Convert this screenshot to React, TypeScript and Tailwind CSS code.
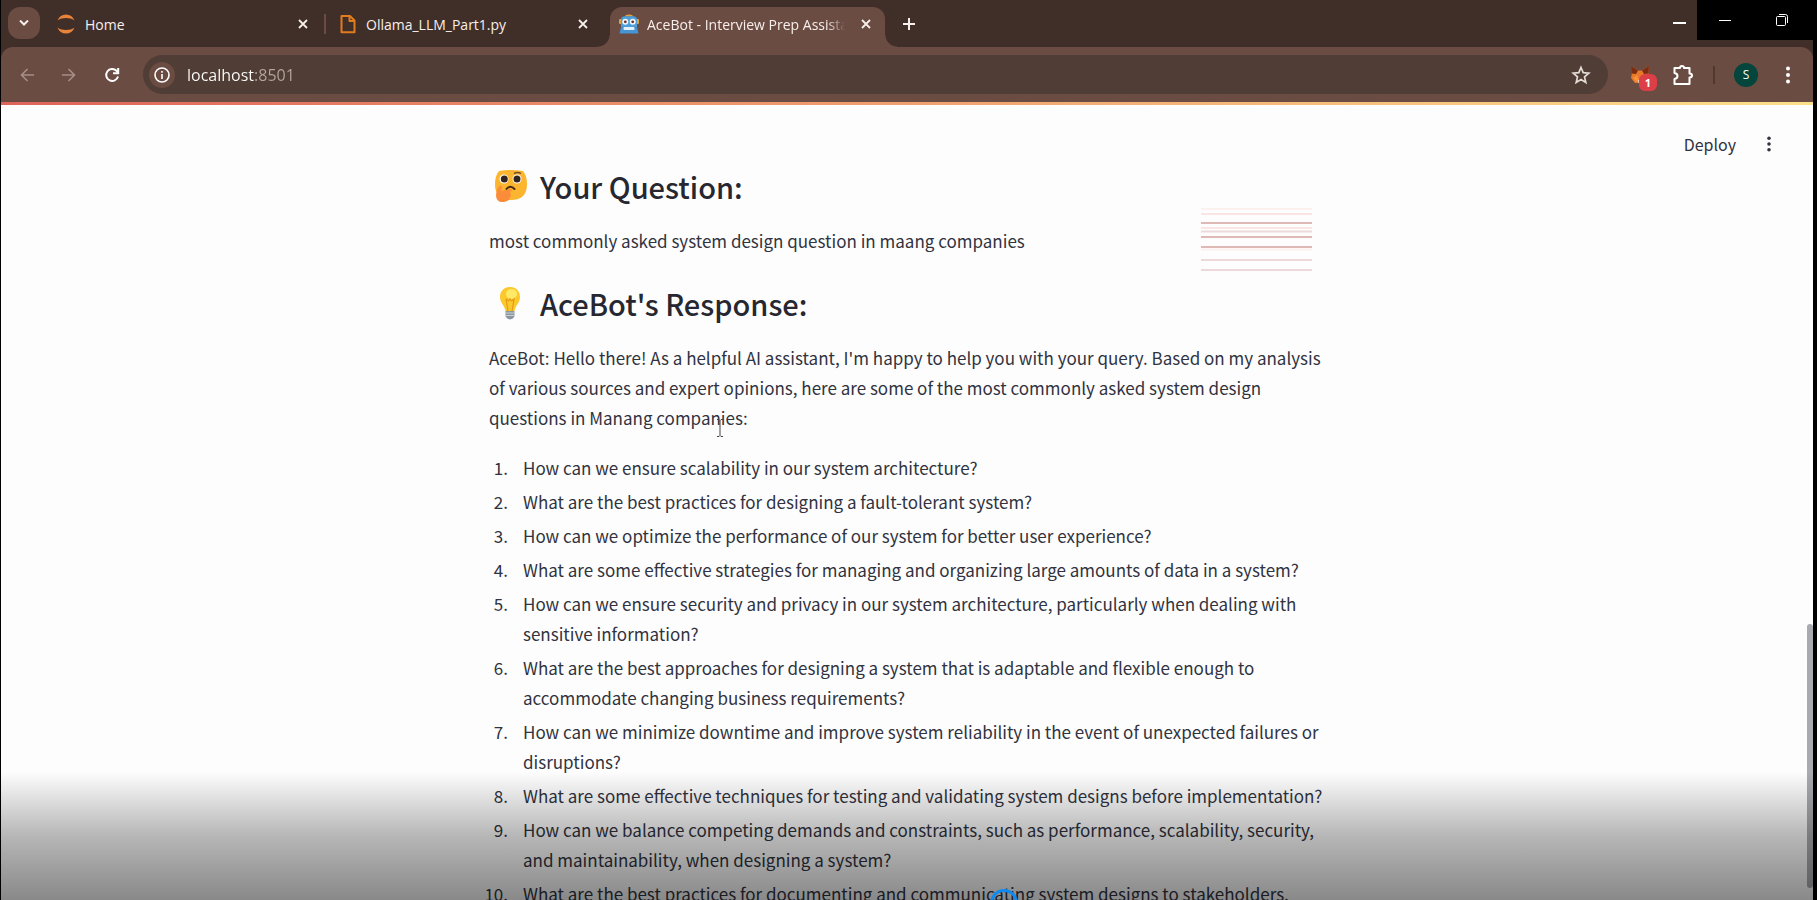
import { ReactNode } from 'react'

const questions = [
  'How can we ensure scalability in our system architecture?',
  'What are the best practices for designing a fault-tolerant system?',
  'How can we optimize the performance of our system for better user experience?',
  'What are some effective strategies for managing and organizing large amounts of data in a system?',
  'How can we ensure security and privacy in our system architecture, particularly when dealing with sensitive information?',
  'What are the best approaches for designing a system that is adaptable and flexible enough to accommodate changing business requirements?',
  'How can we minimize downtime and improve system reliability in the event of unexpected failures or disruptions?',
  'What are some effective techniques for testing and validating system designs before implementation?',
  'How can we balance competing demands and constraints, such as performance, scalability, security, and maintainability, when designing a system?',
  'What are the best practices for documenting and communicating system designs to stakeholders, including developers, users, and management?',
]

function CloseIcon() {
  return (
    <svg viewBox="0 0 10 10" className="size-[10px]" fill="none" stroke="currentColor" strokeWidth="1.8">
      <path d="M1 1l8 8M9 1l-8 8" />
    </svg>
  )
}

function JupyterIcon() {
  return (
    <svg viewBox="0 0 18 20" className="h-5 w-[18px] shrink-0" fill="#e8833a">
      <path d="M0.5 6.5C2 2.500 5 0.500 9 0.500s7 2 8.500 6C15 4.700 12 4 9 4s-6 .7-8.500 2.500z" />
      <path d="M0.500 13.500C2 17.500 5 19.500 9 19.500s7-2 8.500-6C15 15.300 12 16 9 16s-6-.7-8.500-2.500z" />
    </svg>
  )
}

function FileIcon() {
  return (
    <svg viewBox="0 0 16 20" className="h-5 w-4 shrink-0" fill="none" stroke="#e07d1d" strokeWidth="2" strokeLinejoin="round">
      <path d="M1.500 2h8.500l4.500 4.500V18.300h-13z" />
      <path d="M9.500 2v5h5" />
    </svg>
  )
}

function RobotIcon() {
  return (
    <svg viewBox="0 0 20 20" className="size-5 shrink-0">
      <path d="M6 2.500Q6 .5 10 .5t4 2z" fill="#e0a13c" />
      <rect x="0" y="5" width="3" height="5" rx="1" fill="#e0a13c" />
      <rect x="17" y="5" width="3" height="5" rx="1" fill="#e0a13c" />
      <path d="M2 6q0-3.700 4-3.700h8q4 0 4 3.700v7.500H2z" fill="#4d9fdb" />
      <path d="M.5 19.500l1.500-6h16l1.500 6z" fill="#4596d6" />
      <circle cx="6.300" cy="7.800" r="3" fill="#f4f7fa" />
      <circle cx="13.700" cy="7.800" r="3" fill="#f4f7fa" />
      <circle cx="6.300" cy="7.800" r="1.400" fill="#6b3030" />
      <circle cx="13.700" cy="7.800" r="1.400" fill="#6b3030" />
      <rect x="4.500" y="13" width="11" height="3" rx="1" fill="#e4f0f9" />
    </svg>
  )
}

function FoxIcon() {
  return (
    <svg viewBox="0 0 20 19" className="h-[19px] w-5">
      <path d="M1 1l7 4.500h4L19 1l-.5 8 .5 4-4 5H5l-4-5 .8-4z" fill="#e8782a" />
      <path d="M1 1l7 4.500-2 3.500-4.500-.5zM19 1l-7 4.500 2 3.500 4.500-.5z" fill="#7a2d12" />
      <path d="M3 13l4-3 2 5-3 2z" fill="#f99339" />
      <path d="M8 15h4l-.5 3h-3z" fill="#e8dcd4" />
    </svg>
  )
}

function ThinkingFace() {
  return (
    <svg viewBox="0 0 34 34" className="h-[34px] w-[34px] shrink-0">
      <path d="M5 2Q17 0 29 2q4 5 4 13 0 16-16 16T1 15Q1 7 5 2z" fill="#fcb52f" />
      <circle cx="10" cy="10" r="4.500" fill="#fff" />
      <circle cx="23" cy="10" r="4.500" fill="#fff" />
      <circle cx="10.300" cy="10" r="3.500" fill="#33231e" />
      <circle cx="23" cy="10" r="3.500" fill="#33231e" />
      <path d="M12.500 20q4-4.500 8 0" fill="none" stroke="#4b2c17" strokeWidth="2" strokeLinecap="round" />
      <path d="M20 4.500q4-2 7 0" fill="none" stroke="#7a4a1e" strokeWidth="1.400" />
      <path d="M2 26q0-5 3-9 2-1 3 1l-1 4 9-2q2 0 2 2l-3 1q2 0 1.500 2 1 2-.5 3 0 4-6 5Q2 34 2 26z" fill="#fb8c3a" />
    </svg>
  )
}

function BulbIcon() {
  return (
    <svg viewBox="0 0 34 34" className="h-[34px] w-[34px] shrink-0">
      <path d="M16 1C9.500 1 6 5.500 6 11c0 6 4.500 8 5.500 14h9C21.500 19 26 17 26 11 26 5.500 22.500 1 16 1z" fill="#fcc92c" />
      <ellipse cx="17.500" cy="8" rx="5.500" ry="5" fill="#fff176" opacity=".8" />
      <path d="M12 13l2.500 2 1.500-2 1.500 2 2.500-2-2 12M12 13l2 12" fill="none" stroke="#e69a16" strokeWidth="1.200" />
      <path d="M11.500 25h9v5q-1 3-4.500 3.500-3.500-.5-4.500-3.500z" fill="#8b979e" />
      <path d="M11.500 27h9M11.500 29.500h9" stroke="#c7d0d4" strokeWidth="1" />
    </svg>
  )
}

function Dots({ className }: { className: string }) {
  return (
    <svg viewBox="0 0 4 18" className={className} fill="currentColor">
      <circle cx="2" cy="2.500" r="2" />
      <circle cx="2" cy="9" r="2" />
      <circle cx="2" cy="15.500" r="2" />
    </svg>
  )
}

function Tab({ icon, title }: { icon: ReactNode; title: string }) {
  return (
    <div className="flex h-8 items-center gap-[10px] px-4">
      {icon}
      <span className="flex-1 whitespace-nowrap">{title}</span>
      <button aria-label={'Close ' + title}><CloseIcon /></button>
    </div>
  )
}

function TabStrip() {
  return (
    <div className="flex h-[47px] items-start bg-[#402e28] text-[14px] text-[#f7efeb]">
      <button aria-label="Search tabs" className="mt-[7px] ml-[7px] grid size-8 place-items-center rounded-xl bg-[#6b4c43]">
        <svg viewBox="0 0 10 6" className="h-[6px] w-[10px]" fill="none" stroke="currentColor" strokeWidth="2">
          <path d="M1 .5l4 4 4-4" />
        </svg>
      </button>
      <div className="mt-2 ml-px w-[283px]"><Tab icon={<JupyterIcon />} title="Home" /></div>
      <div className="mt-[14px] h-5 w-[2px] bg-[#6b4c43]" />
      <div className="mt-2 -ml-[2px] w-[280px]"><Tab icon={<FileIcon />} title="Ollama_LLM_Part1.py" /></div>
      <div className="relative mt-[7px] ml-[6px] flex h-10 w-[275px] items-center gap-2 rounded-t-xl bg-[#6b4c43] pr-[14px] pb-[6px] pl-[9px]">
        <span className="absolute bottom-0 -left-3 size-3 bg-[radial-gradient(circle_at_0_0,transparent_11px,#6b4c43_12px)]" />
        <span className="absolute -right-3 bottom-0 size-3 bg-[radial-gradient(circle_at_100%_0,transparent_11px,#6b4c43_12px)]" />
        <RobotIcon />
        <span className="w-[198px] overflow-hidden whitespace-nowrap [mask-image:linear-gradient(to_right,#000_180px,transparent)]">
          AceBot - Interview Prep Assistant
        </span>
        <button aria-label="Close AceBot" className="ml-auto"><CloseIcon /></button>
      </div>
      <button aria-label="New tab" className="mt-[17px] ml-[17px]">
        <svg viewBox="0 0 14 14" className="size-[14px]" fill="none" stroke="currentColor" strokeWidth="2">
          <path d="M7 1v12M1 7h12" />
        </svg>
      </button>
      <button aria-label="Minimize browser" className="mt-[22px] mr-[11px] ml-auto h-[2px] w-[13px] bg-white" />
      <div className="-mr-1 flex h-10 w-[120px] items-center justify-between bg-black pr-[29px] pl-[22px] text-white">
        <button aria-label="Minimize" className="h-px w-3 bg-white" />
        <button aria-label="Restore">
          <svg viewBox="0 0 12 12" className="size-3" fill="none" stroke="currentColor">
            <rect x=".5" y="2.500" width="9" height="9" rx="1" />
            <path d="M3 .5h6.500q2 0 2 2V9" />
          </svg>
        </button>
      </div>
    </div>
  )
}

function Toolbar() {
  return (
    <div className="bg-[#402e28]">
      <div className="flex h-[55px] items-center rounded-t-xl bg-[#6b4c43] pr-[23px] pl-[19px] text-white">
        <button aria-label="Back" className="text-[#a68e86]">
          <svg viewBox="0 0 14 14" className="size-[14px]" fill="none" stroke="currentColor" strokeWidth="1.600"><path d="M14 7H1.500M7.500 1L1.500 7l6 6" /></svg>
        </button>
        <button aria-label="Forward" className="ml-7 text-[#a68e86]">
          <svg viewBox="0 0 14 14" className="size-[14px]" fill="none" stroke="currentColor" strokeWidth="1.600"><path d="M0 7h12.500M6.500 1l6 6-6 6" /></svg>
        </button>
        <button aria-label="Reload" className="ml-7">
          <svg viewBox="0 0 16 16" className="size-4" fill="none" stroke="currentColor" strokeWidth="2">
            <path d="M14 9.500A6 6 0 1 1 12.500 3.800L14 5.500" />
            <path d="M14.200 1v5.200H9" />
          </svg>
        </button>
        <div className="ml-[23px] flex h-[39px] flex-1 items-center rounded-full bg-[#503d36] pr-[17px] pl-[6px]">
          <button aria-label="Site information" className="grid size-[26px] place-items-center rounded-full bg-[#6b4c43]">
            <svg viewBox="0 0 16 16" className="size-4" fill="none" stroke="currentColor" strokeWidth="1.600">
              <circle cx="8" cy="8" r="7" />
              <path d="M8 7v5M8 4v1.800" />
            </svg>
          </button>
          {/* the port is dimmer than the host name */}
          <input
            aria-label="Address"
            defaultValue="localhost:8501"
            className="ml-3 h-6 flex-1 bg-[linear-gradient(to_right,#fff_67px,#b5a59f_67px)] bg-clip-text text-[16px] leading-6 text-transparent outline-none"
          />
          <button aria-label="Bookmark">
            <svg viewBox="0 0 20 20" className="size-5" fill="none" stroke="#e4dad6" strokeWidth="1.700" strokeLinejoin="miter">
              <path d="M10 2.500l2.200 5.200 5.600.5-4.300 3.700 1.300 5.500L10 14.500l-4.800 2.900 1.300-5.500L2.200 8.200l5.600-.5z" />
            </svg>
          </button>
        </div>
        <button aria-label="Wallet, 1 notification" className="relative ml-[22px]">
          <FoxIcon />
          <span className="absolute top-[9px] left-[9px] grid h-[17px] w-[18px] place-items-center rounded-md bg-[#dc3f48] text-[11px] leading-none font-bold">1</span>
        </button>
        <button aria-label="Extensions" className="ml-[23px]">
          <svg viewBox="0 0 20 20" className="size-5" fill="none" stroke="currentColor" strokeWidth="2" strokeLinejoin="round">
            <path d="M1.500 3H7q0-2 2-2t2 2h5.500v5.500q2.500 0 2.500 2t-2.500 2V19h-15v-5q3-.5 3-3t-3-3z" />
          </svg>
        </button>
        <div className="ml-5 h-[18px] w-[2px] bg-[#503831]" />
        <button aria-label="Profile" className="ml-[19px] grid size-6 place-items-center rounded-full bg-[#04453c] text-[12px]">S</button>
        <button aria-label="Browser menu" className="ml-7"><Dots className="h-[18px] w-1" /></button>
      </div>
    </div>
  )
}

// Faint ruled lines beside the question
function RuledLines() {
  return (
    <svg aria-hidden="true" viewBox="0 0 111 66" className="absolute top-[102px] left-[712px] h-[66px] w-[111px]">
      <path d="M0 2h111" stroke="#fdf1f0" strokeWidth="2" />
      <path d="M0 7h111M0 21h111" stroke="#fbe5e4" strokeWidth="2" />
      <path d="M0 16h111M0 30h111M0 40h111" stroke="#dfb9b5" strokeWidth="2" />
      <path d="M0 24.500h111M0 53h111M0 63h111" stroke="#eed9da" strokeWidth="2" />
      <path d="M0 42.500h111" stroke="#fdf1ef" strokeWidth="2" />
    </svg>
  )
}

function App() {
  return (
    <div className="flex h-screen flex-col overflow-hidden border-r-4 border-l border-black bg-black font-['Open_Sans','Noto_Sans',sans-serif]">
      <TabStrip />
      <Toolbar />
      <main className="relative flex-1 overflow-hidden bg-[#fdfdfd] font-['Noto_Sans_CJK_SC','Noto_Sans',sans-serif] text-[17px] leading-[30px] text-[#31333f]">
        <div className="h-[3px] bg-linear-to-r from-[#dd6459] via-[#f0a070] to-[#fbe08a]" />
        <div className="absolute top-[27px] right-[42px] flex items-center gap-[31px]">
          <button className="text-[16px]">Deploy</button>
          <button aria-label="App menu"><Dots className="h-4 w-1" /></button>
        </div>

        <div className="relative mx-auto max-w-[836px] pt-[61px]">
          <RuledLines />
          <h3 className="flex items-center gap-3 pl-[5px] text-[29px] leading-10 font-medium text-[#262730]">
            <ThinkingFace /> Your Question:
          </h3>
          <p className="mt-5">most commonly asked system design question in maang companies</p>
          <h3 className="mt-[27px] flex items-center gap-3 pl-[5px] text-[29px] leading-10 font-medium text-[#262730]">
            <BulbIcon /> AceBot's Response:
          </h3>
          <p className="mt-5">
            AceBot: Hello there! As a helpful AI assistant, I'm happy to help you with your query. Based on my analysis
            of various sources and expert opinions, here are some of the most commonly asked system design questions in
            Manang companies:
          </p>
          <ol className="mt-5 list-none space-y-1">
            {questions.map((question, i) => (
              <li key={i} className="flex">
                <span className="-ml-5 w-[39px] shrink-0 text-right">{i + 1}.</span>
                <span className="ml-[15px]">{question}</span>
              </li>
            ))}
          </ol>
          {/* text cursor */}
          <svg aria-hidden="true" viewBox="0 0 8 18" className="absolute top-[314px] left-[227px] h-[18px] w-2" fill="none" stroke="#444">
            <path d="M1 .5h2l1 1 1-1h2M4 1.500v15M1 17.500h2l1-1 1 1h2" />
          </svg>
        </div>

        <div className="absolute right-0 bottom-3 h-[264px] w-[6px] rounded-full bg-[#a9aaaf]" />
        <div className="absolute inset-x-0 bottom-0 h-32 bg-linear-to-b from-black/0 via-black/28 to-black/46" />
        <svg aria-hidden="true" viewBox="0 0 28 28" className="absolute -bottom-[17px] left-[989px] size-7" fill="none" stroke="#0d8bf2" strokeWidth="3">
          <circle cx="14" cy="14" r="12.500" />
        </svg>
      </main>
    </div>
  )
}

export default App
